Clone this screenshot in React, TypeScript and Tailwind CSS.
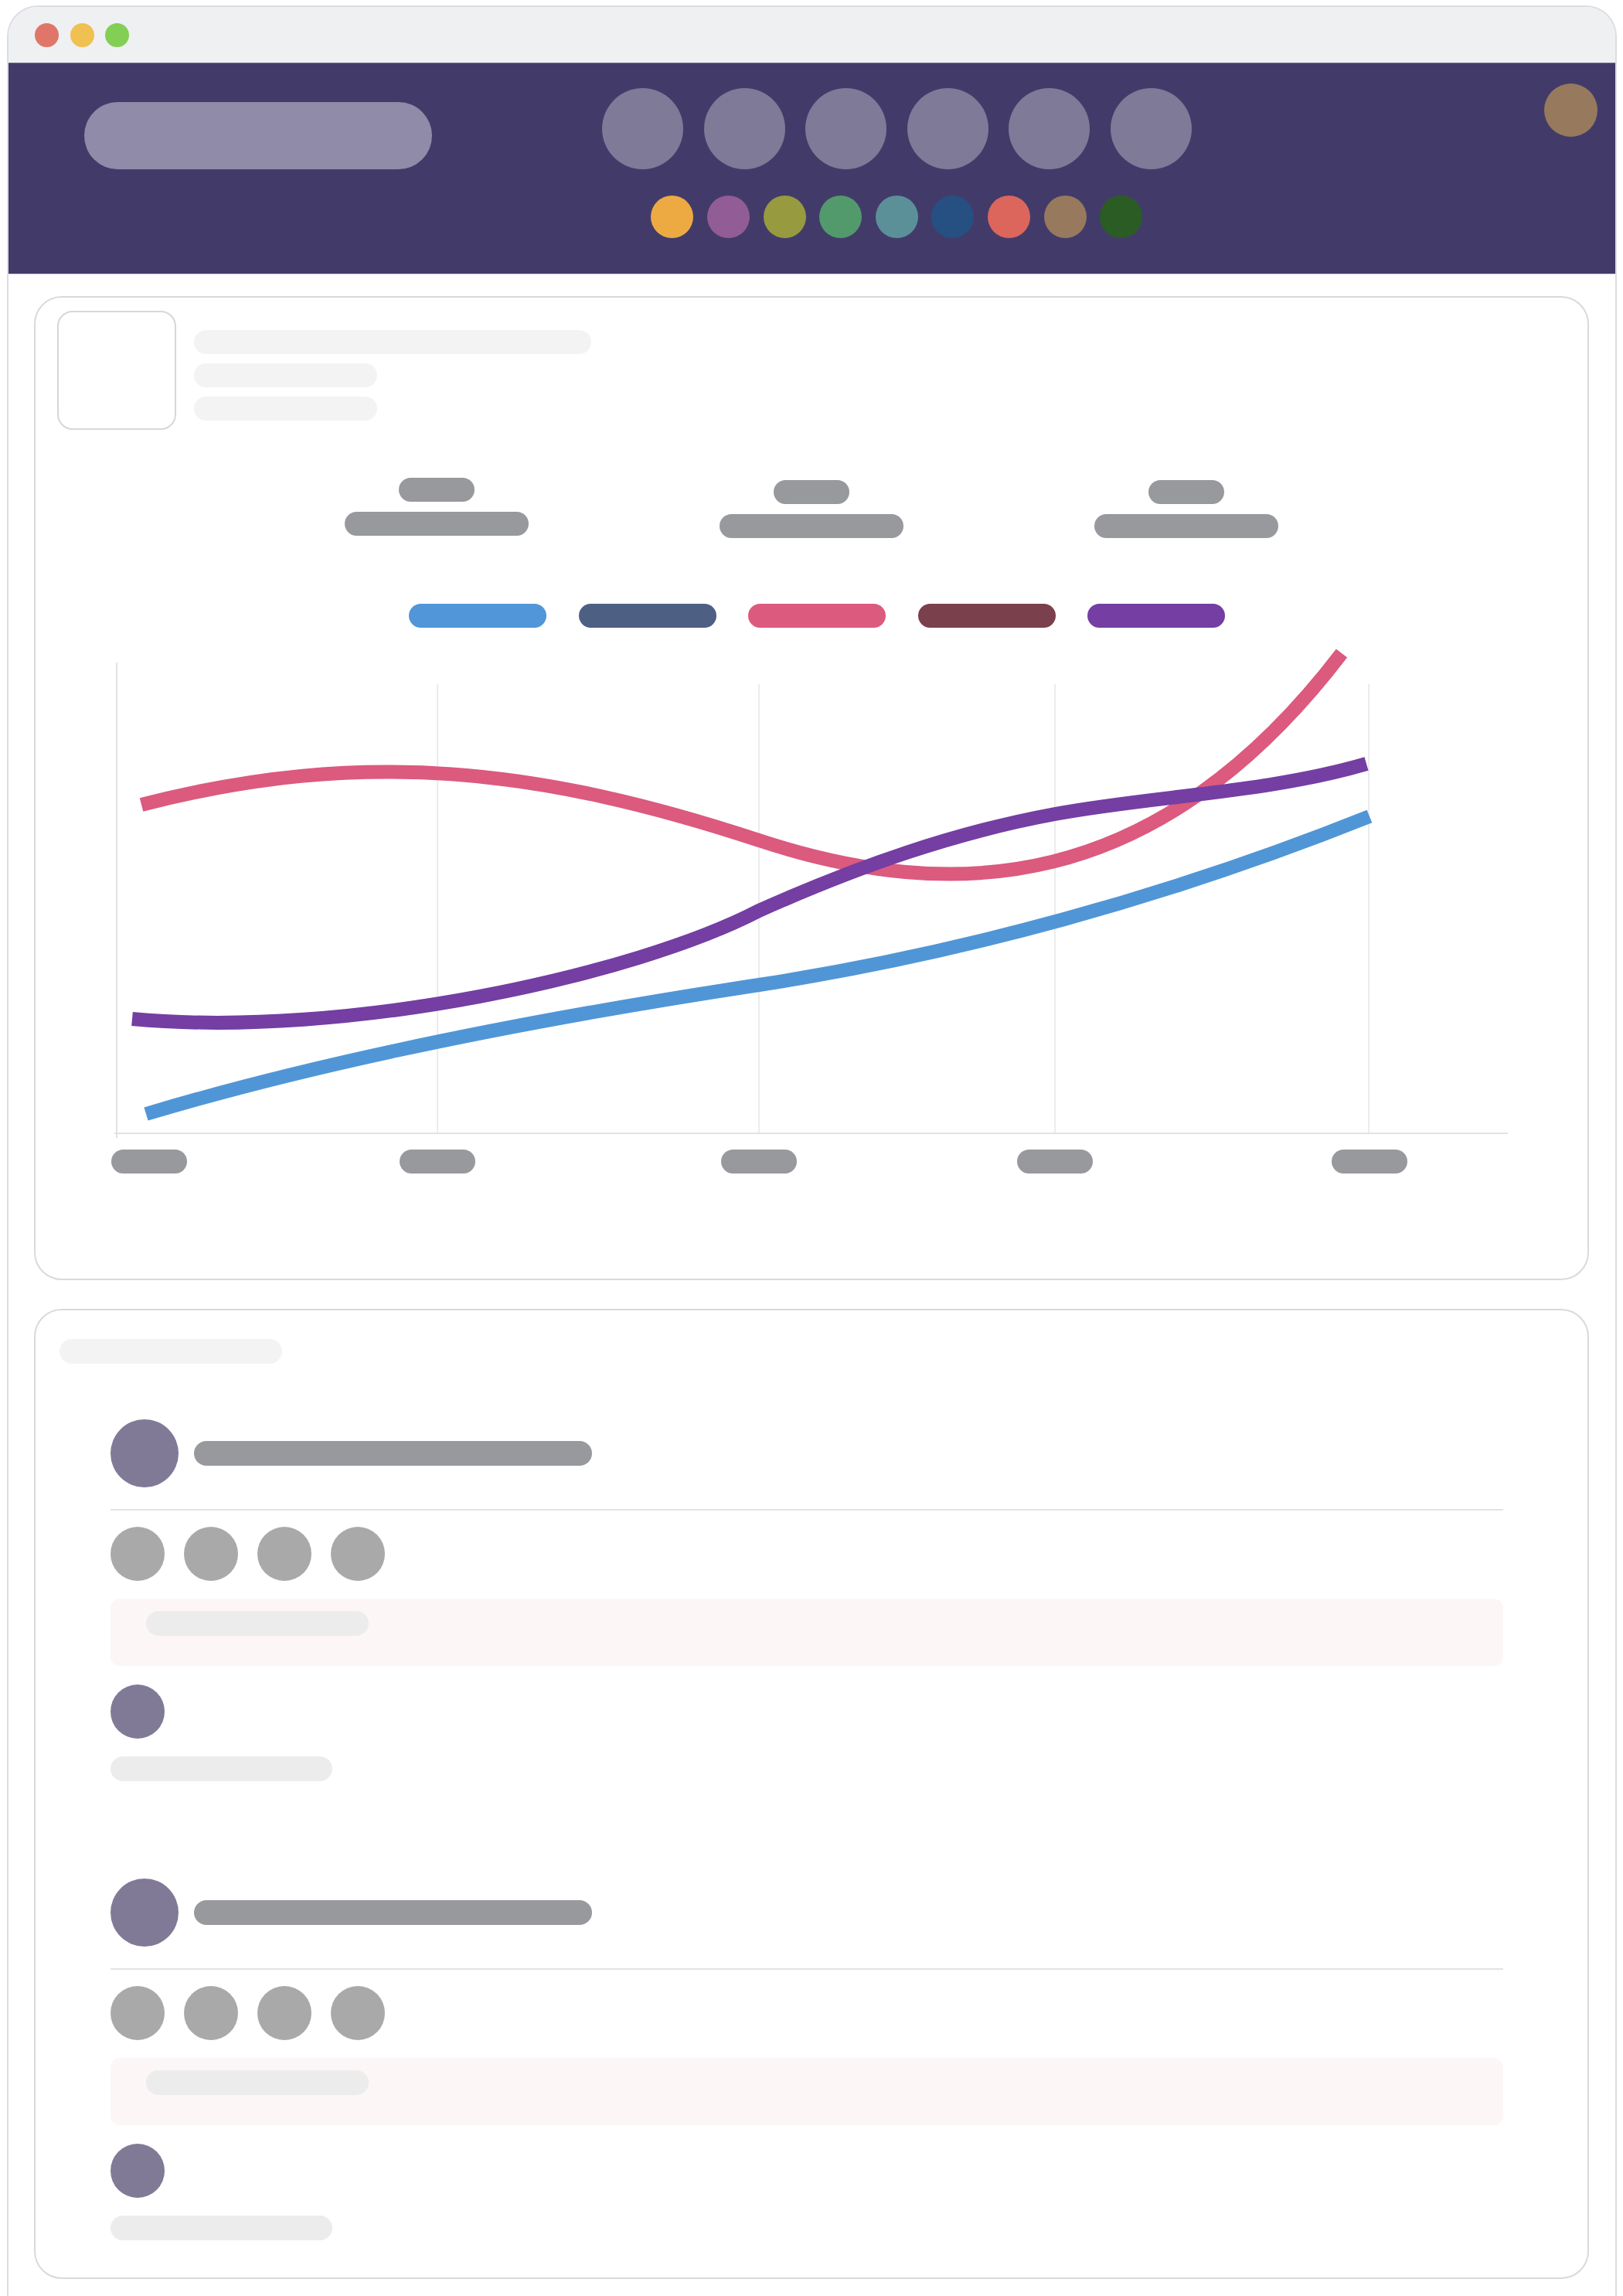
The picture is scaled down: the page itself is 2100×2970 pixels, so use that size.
// chart lines, hand-fitted cubic beziers (page coordinates)
const pinkPath =
  'M183,1042 C470,968 700,995 982,1088 C1232,1170 1496,1160 1736,846'
const bluePath =
  'M189,1442 C439,1367 732,1313 982,1275 C1242,1235 1512,1161 1772,1057'
const purplePath =
  'M171,1319 C450,1345 822,1262 982,1179 C1112,1121 1235,1078 1365,1054 C1495,1030 1638,1027 1768,989'

const swatches = ['#edaa43', '#925c96', '#979a3e', '#529a6c', '#5b9099', '#264f82', '#dc665c', '#97795d', '#2b5c24']
const legend = ['#5096d8', '#4d5f83', '#dc5a7e', '#7a404b', '#743ea3']
const gridX = [566, 982, 1365, 1771]
const labelX = [144, 517, 933, 1316, 1723]

function Chart() {
  return (
    <svg className="block" width={2008} height={710} viewBox="46 830 2008 710">
      <line x1={151} y1={858} x2={151} y2={1473} stroke="#e2e2e2" strokeWidth={2} />
      {gridX.map((x) => (
        <line key={x} x1={x} y1={886} x2={x} y2={1467} stroke="#e6e6e6" strokeWidth={1.5} />
      ))}
      <line x1={148} y1={1467} x2={1951} y2={1467} stroke="#e2e2e2" strokeWidth={2} />
      {labelX.map((x) => (
        <rect key={x} x={x} y={1488} width={98} height={31} rx={15.5} fill="#98999d" />
      ))}
      <path d={pinkPath} fill="none" stroke="#db5a7e" strokeWidth={18} />
      <path d={purplePath} fill="none" stroke="#743ea3" strokeWidth={18} />
      <path d={bluePath} fill="none" stroke="#5096d6" strokeWidth={18} />
    </svg>
  )
}

function Stat({ offset = false }: { offset?: boolean }) {
  return (
    <div className={`w-[485px] flex flex-col items-center gap-[13px] ${offset ? 'mt-[3px]' : ''}`}>
      <div className="w-[98px] h-[31px] rounded-full bg-[#98999d]" />
      <div className="w-[238px] h-[31px] rounded-full bg-[#98999d]" />
    </div>
  )
}

function ActivityRow({ first = false }: { first?: boolean }) {
  return (
    <div className={first ? 'mt-[72px]' : 'mt-[126px]'}>
      <div className="flex items-center gap-[20px]">
        <div className="w-[88px] h-[88px] rounded-full bg-[#807a97]" />
        <div className="w-[515px] h-[32px] rounded-full bg-[#98999d]" />
      </div>
      <div className="mt-[28px] h-[2px] bg-[#e3e3e3]" />
      <div className="mt-[21px] flex gap-[25px]">
        {[0, 1, 2, 3].map((i) => (
          <div key={i} className="w-[70px] h-[70px] rounded-full bg-[#a8a9a8]" />
        ))}
      </div>
      <div className="mt-[23px] h-[87px] rounded-xl bg-[#fcf6f6] pt-[16px] pl-[46px]">
        <div className="w-[288px] h-[32px] rounded-full bg-[#ececec]" />
      </div>
      <div className="mt-[24px] w-[70px] h-[70px] rounded-full bg-[#807a97]" />
      <div className="mt-[23px] w-[287px] h-[32px] rounded-full bg-[#ececec]" />
    </div>
  )
}

export default function App() {
  return (
    <div className="bg-white min-h-[2970px] overflow-hidden">
      <div className="ml-[9px] mt-[7px] w-[2083px] h-[2990px] border-2 border-b-0 border-[#dcdde2] rounded-t-[40px] overflow-hidden bg-white">
        {/* title bar */}
        <div className="h-[72px] bg-[#eff0f2] flex items-center pl-[34px] gap-[14.5px]">
          <div className="w-[31px] h-[31px] rounded-full bg-[#e0766a]" />
          <div className="w-[31px] h-[31px] rounded-full bg-[#f0c050]" />
          <div className="w-[31px] h-[31px] rounded-full bg-[#83cf55]" />
        </div>

        {/* top nav */}
        <div className="h-[274px] bg-[#423b6a] border-t border-[#6f6a8c] border-b border-b-[#d6d4e3] flex items-start">
          <div className="ml-[98px] mt-[50px] w-[450px] h-[87px] rounded-full bg-[#8f8ba8]" />
          <div className="ml-[220px] mt-[32px] flex flex-col items-center gap-[34px]">
            <div className="flex gap-[26.5px]">
              {[0, 1, 2, 3, 4, 5].map((i) => (
                <div key={i} className="w-[105px] h-[105px] rounded-full bg-[#7f7a97]" />
              ))}
            </div>
            <div className="flex gap-[17.6px]">
              {swatches.map((c) => (
                <div key={c} className="w-[55px] h-[55px] rounded-full" style={{ backgroundColor: c }} />
              ))}
            </div>
          </div>
          <div className="ml-auto mr-[23px] mt-[26px] w-[69px] h-[69px] rounded-full bg-[#97795d]" />
        </div>

        {/* content */}
        <div className="pt-[28px] pl-[33px] pr-[34px]">
          {/* chart card */}
          <div className="border-2 border-[#dcd9d6] rounded-[36px] pb-[115px]">
            <div className="mt-[17px] ml-[28px] flex items-start gap-[23px]">
              <div className="w-[154px] h-[154px] border-2 border-[#dad6d2] rounded-[20px]" />
              <div className="mt-[25px] flex flex-col gap-[12px]">
                <div className="w-[514px] h-[31px] rounded-full bg-[#f3f3f3]" />
                <div className="w-[237px] h-[31px] rounded-full bg-[#f3f3f3]" />
                <div className="w-[237px] h-[31px] rounded-full bg-[#f3f3f3]" />
              </div>
            </div>

            <div className="mt-[62px] flex justify-center items-start">
              <Stat />
              <Stat offset />
              <Stat offset />
            </div>

            <div className="mt-[85px] flex justify-center gap-[41.5px] pl-[14px]">
              {legend.map((c) => (
                <div key={c} className="w-[178px] h-[31px] rounded-full" style={{ backgroundColor: c }} />
              ))}
            </div>

            <div className="mt-[17px]">
              <Chart />
            </div>
          </div>

          {/* activity card */}
          <div className="mt-[37px] border-2 border-[#dcd9d6] rounded-[36px] pb-[48px]">
            <div className="mt-[37px] ml-[31px] w-[288px] h-[32px] rounded-full bg-[#f3f3f3]" />
            <div className="pl-[97px] pr-[109px]">
              <ActivityRow first />
              <ActivityRow />
            </div>
          </div>
        </div>
      </div>
    </div>
  )
}
